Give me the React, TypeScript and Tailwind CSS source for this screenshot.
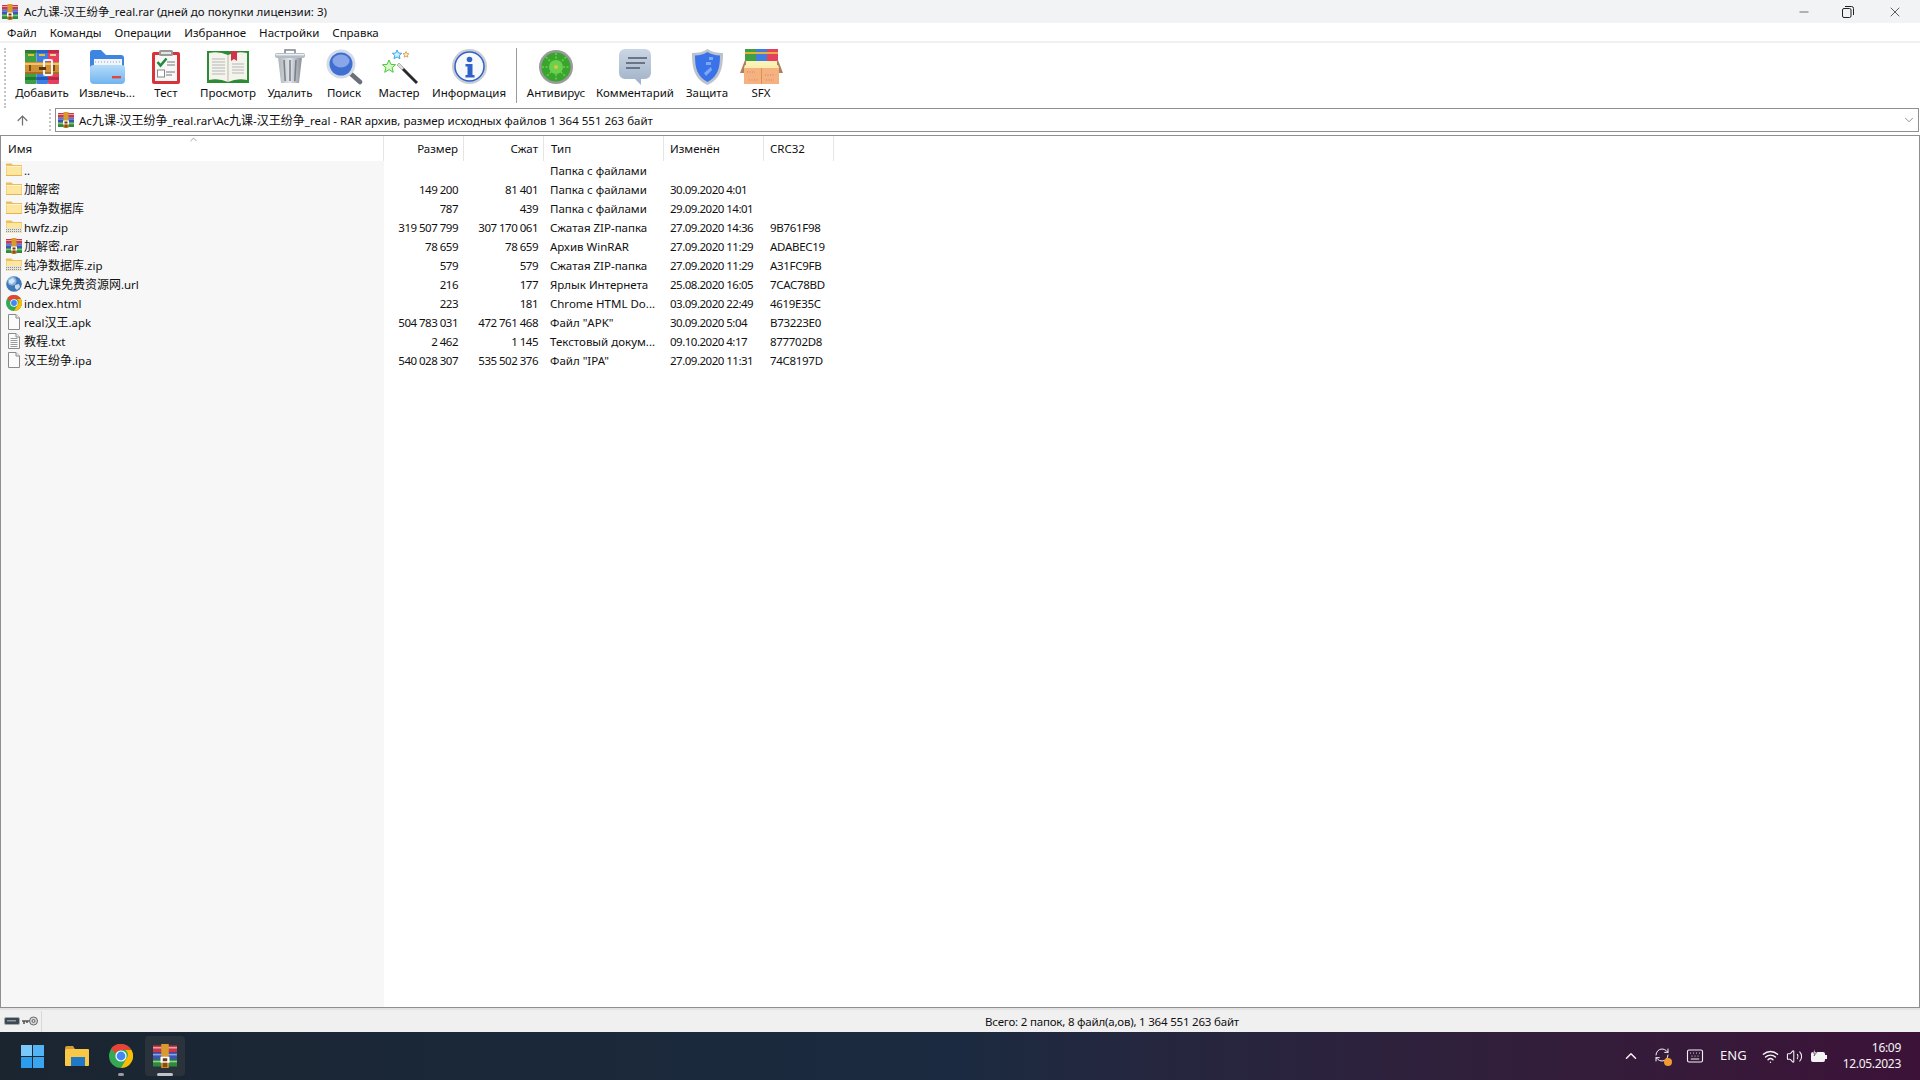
import { ArrowUp, ChevronDown, ChevronUp, Keyboard, Minus, RefreshCw, Volume2, Wifi, X } from "lucide-react";
import type { ReactNode } from "react";

const RarSmall = ({ size = 16 }: { size?: number }) => (
  <svg width={size} height={size} viewBox="0 0 16 16" className="shrink-0">
    <rect x="0" y="1" width="16" height="4.6" fill="#c8384c" />
    <rect x="0" y="5.6" width="16" height="4.6" fill="#3c55b4" />
    <rect x="0" y="10.2" width="16" height="4.8" fill="#2d8a3e" />
    <rect x="0" y="2" width="16" height="1" fill="#e9a0a0" />
    <rect x="0" y="6.6" width="16" height="1" fill="#8fa4e8" />
    <rect x="0" y="11.2" width="16" height="1" fill="#8fd08f" />
    <rect x="5.5" y="0" width="5" height="16" fill="#d99a2e" />
    <rect x="5" y="8.5" width="6" height="4" fill="#fff" />
    <rect x="6.5" y="9.5" width="3" height="2" fill="#6a3a1a" />
    <rect x="6.5" y="12.5" width="3" height="3" fill="#8a4a1a" />
  </svg>
);

const FolderIcon = () => (
  <svg width="16" height="16" viewBox="0 0 16 16" className="shrink-0">
    <path d="M0 1.5h5.5l1.5 1.500h9v11H0z" fill="#ecbe5c" />
    <rect x="0.5" y="4" width="15" height="10" fill="#fde6a0" />
    <rect x="0.5" y="4" width="15" height="1" fill="#fef3cf" />
    <rect x="0" y="13" width="16" height="1" fill="#e6b350" />
  </svg>
);

const ZipFolderIcon = () => (
  <svg width="16" height="16" viewBox="0 0 16 16" className="shrink-0">
    <path d="M0 1.5h5.5l1.5 1.500h9v11H0z" fill="#ecbe5c" />
    <rect x="0.5" y="4" width="15" height="10" fill="#fde6a0" />
    <rect x="0" y="9" width="16" height="4.500" fill="#e4e4da" />
    <path d="M0 10.500h16M0 12.500h16" stroke="#8f8f88" strokeDasharray="1 1" />
  </svg>
);

const GlobeIcon = () => (
  <svg width="16" height="16" viewBox="0 0 16 16" className="shrink-0">
    <circle cx="8" cy="8" r="7.8" fill="#3f78b8" />
    <circle cx="6" cy="5" r="4.5" fill="#9cc4e8" opacity="0.8" />
    <path d="M3 4l4-2 2 3-3 3-3-1zM9 9l4-1 1 3-3 3-2-2z" fill="#e4eef6" opacity="0.85" />
  </svg>
);

const ChromeIcon = ({ size = 16 }: { size?: number }) => (
  <svg width={size} height={size} viewBox="0 0 24 24" className="shrink-0">
    <circle cx="12" cy="12" r="12" fill="#34a853" />
    <path d="M12 0a12 12 0 0 1 10.4 6H12a6 6 0 0 0-5.6 3.8L2.2 4.3A12 12 0 0 1 12 0z" fill="#ea4335" />
    <path d="M22.4 6A12 12 0 0 1 12 24l5.2-9a6 6 0 0 0-.7-9z" fill="#fbbc05" />
    <circle cx="12" cy="12" r="5.6" fill="#fff" />
    <circle cx="12" cy="12" r="4.4" fill="#4285f4" />
  </svg>
);

const FileIcon = ({ lines = false }: { lines?: boolean }) => (
  <svg width="16" height="16" viewBox="0 0 16 16" className="shrink-0">
    <path d="M2.5 0.5h7.5l3.5 3.5v11.5h-11z" fill="#fbfbfb" stroke="#8a8a8a" />
    <path d="M10 0.5v3.5h3.5" fill="#eee" stroke="#8a8a8a" />
    {lines && <path d="M4.5 5.5h7M4.5 7.5h7M4.5 9.5h7M4.5 11.5h7M4.5 13.5h7" stroke="#9a9a9a" />}
  </svg>
);

const AddIcon = () => (
  <svg width="34" height="34" viewBox="0 0 34 34">
    <rect x="0" y="0" width="11.5" height="34" rx="1" fill="#3f9f45" />
    <rect x="11.5" y="0" width="11.5" height="34" rx="1" fill="#3f7ee0" />
    <rect x="23" y="0" width="11" height="34" rx="1" fill="#e54060" />
    <rect x="0" y="0" width="11.5" height="3" fill="#2c7d34" />
    <rect x="11.5" y="0" width="11.5" height="3" fill="#2a62c4" />
    <rect x="23" y="0" width="11" height="3" fill="#c22c48" />
    <rect x="3" y="4" width="6" height="2" fill="#e3c03c" />
    <rect x="14" y="4" width="6" height="2" fill="#e3c03c" />
    <rect x="25" y="4" width="6" height="2" fill="#f2d0a0" />
    <rect x="0" y="27" width="11.5" height="3" fill="#1f7d30" />
    <rect x="11.5" y="27" width="11.5" height="3" fill="#2458b8" />
    <rect x="23" y="27" width="11" height="3" fill="#b82840" />
    <rect x="0" y="12" width="34" height="12" fill="#cf9133" />
    <rect x="0" y="13" width="34" height="2" fill="#edc36c" />
    <rect x="0" y="22" width="34" height="2" fill="#a86e20" />
    <rect x="4" y="15" width="2" height="6" fill="#7a4a18" />
    <rect x="28" y="15" width="2" height="6" fill="#7a4a18" />
    <rect x="19" y="10" width="8" height="15" rx="1" fill="none" stroke="#f4f4f4" strokeWidth="2" />
    <rect x="14" y="17" width="7" height="3" fill="#5b3512" />
  </svg>
);

const ExtractIcon = () => (
  <svg width="36" height="34" viewBox="0 0 36 34">
    <defs>
      <linearGradient id="extractFront" x1="0" y1="0" x2="0" y2="1">
        <stop offset="0" stopColor="#b6dcfa" />
        <stop offset="1" stopColor="#6fb4f0" />
      </linearGradient>
    </defs>
    <path d="M1 3a3 3 0 0 1 3-3h8l5 5h15a3 3 0 0 1 3 3v22H1z" fill="#3c86e2" />
    <rect x="5" y="9" width="28" height="9" fill="#f2f6fa" />
    <path d="M6 12h26" stroke="#8a9fb8" strokeDasharray="1 2" />
    <path d="M1 18q0-3 4-3h27q4 0 4 3v12q0 4-4 4H5q-4 0-4-4z" fill="url(#extractFront)" />
    <rect x="23" y="26" width="9" height="2.4" fill="#e0483c" />
  </svg>
);

const TestIcon = () => (
  <svg width="28" height="34" viewBox="0 0 28 34">
    <rect x="0" y="2" width="28" height="32" rx="2" fill="#d7333a" />
    <rect x="3" y="5" width="22" height="26" fill="#f7f7f7" />
    <rect x="7" y="0" width="14" height="6" rx="1.5" fill="#9a9a9a" />
    <rect x="9" y="2" width="10" height="2" fill="#e4e4e4" />
    <path d="M5.5 12l3 3.5 6-7" fill="none" stroke="#1f8a38" strokeWidth="2.5" />
    <path d="M15 12h8M15 15h8M14 22h9M14 25h6" stroke="#777" />
    <rect x="5.5" y="20" width="7" height="7" fill="#fff" stroke="#888" />
  </svg>
);

const BookIcon = () => (
  <svg width="42" height="32" viewBox="0 0 42 32">
    <rect x="0" y="0" width="42" height="32" fill="#2d8a35" />
    <path d="M2 2q10-2 19 2 9-4 19-2v27q-10-2-19 2-9-4-19-2z" fill="#f4f4ec" />
    <path d="M21 4v27" stroke="#b8b8a8" />
    <path d="M5 8h13M5 11h13M5 14h13M5 17h13M5 20h13M5 23h13M25 13h12M25 16h12M25 19h12M25 22h12" stroke="#b5b5b5" />
    <path d="M24 0h6v10l-3-2-3 2z" fill="#d2324a" />
  </svg>
);

const TrashIcon = () => (
  <svg width="30" height="35" viewBox="0 0 30 35">
    <defs>
      <linearGradient id="trashBody" x1="0" y1="0" x2="1" y2="0">
        <stop offset="0" stopColor="#aeb4bc" />
        <stop offset="0.5" stopColor="#e2e6ea" />
        <stop offset="1" stopColor="#868c96" />
      </linearGradient>
    </defs>
    <path d="M10 4V1h10v3" fill="none" stroke="#7d838c" strokeWidth="1.5" />
    <path d="M3 8h24l-3 26H6z" fill="url(#trashBody)" />
    <path d="M9 11l1.2 21M15 11v21M21 11l-1.2 21" stroke="#7b818a" strokeWidth="1.6" />
    <rect x="0" y="4" width="30" height="5" rx="2" fill="#b6bcc4" />
    <rect x="1" y="5" width="28" height="1.4" fill="#eef0f2" />
  </svg>
);

const SearchIcon = () => (
  <svg width="37" height="36" viewBox="0 0 37 36">
    <path d="M24 24l10 9" stroke="#6a6f78" strokeWidth="4.500" strokeLinecap="round" />
    <circle cx="15" cy="15" r="14.5" fill="#d4dbe8" />
    <circle cx="15" cy="15" r="11.5" fill="#3f6fd0" />
    <ellipse cx="15" cy="12" rx="8.500" ry="6.500" fill="#88a6e8" />
  </svg>
);

const WizardIcon = () => (
  <svg width="38" height="36" viewBox="0 0 38 36">
    <path d="M18 15l19 19" stroke="#2a2a2a" strokeWidth="3" />
    <path d="M18 15l5 5" stroke="#dcdcdc" strokeWidth="3" />
    <path transform="translate(3 -1)" d="M6 12l2 4.4 4.6.3-3.5 3 1.2 4.6L6 21.6l-4.3 2.7 1.2-4.6-3.4-3 4.6-.3z" fill="#d8f8c8" stroke="#46c83a" />
    <path d="M17 1l1.4 3 3.3.3-2.5 2.2.8 3.2-3-1.8-3 1.8.8-3.2L12.400 4.300l3.300-.3z" fill="#d2efff" stroke="#38a8e8" />
    <path transform="translate(-1 1.500)" d="M27 1l.9 2 2.100.2-1.600 1.400.5 2.100L27 5.600l-1.900 1.100.5-2.100L24 3.200l2.100-.2z" fill="#fbeecb" stroke="#dca860" />
  </svg>
);

const InfoIcon = () => (
  <svg width="35" height="35" viewBox="0 0 35 35">
    <circle cx="17.500" cy="17.500" r="17.500" fill="#c9ccd2" />
    <circle cx="17.500" cy="17.500" r="14.500" fill="#f6f8fc" stroke="#2f62c8" strokeWidth="1.500" />
    <circle cx="17.500" cy="10.500" r="2.800" fill="#2f62c8" />
    <path d="M13.500 15h7v11h2v2.500h-9V26h2v-8.500h-2z" fill="#2f62c8" />
  </svg>
);

const AntivirusIcon = () => (
  <svg width="34" height="34" viewBox="0 0 34 34">
    <circle cx="17" cy="17" r="17" fill="#9a9a9a" />
    <circle cx="17" cy="17" r="14.500" fill="#3aa52e" />
    <circle cx="17" cy="17" r="7" fill="#6ad04e" />
    <path d="M17 3v28M3 17h28M7 7l20 20M27 7L7 27" stroke="#6ad04e" strokeWidth="1.500" strokeDasharray="2 1.500" />
    <circle cx="17" cy="17" r="2" fill="#d8c840" />
  </svg>
);

const CommentIcon = () => (
  <svg width="32" height="36" viewBox="0 0 32 36">
    <defs>
      <linearGradient id="commentBody" x1="0" y1="0" x2="0" y2="1">
        <stop offset="0" stopColor="#cbd6e4" />
        <stop offset="1" stopColor="#9fb0c8" />
      </linearGradient>
    </defs>
    <path d="M6 0h20a6 6 0 0 1 6 6v18a6 6 0 0 1-6 6h-4v6l-6-6H6a6 6 0 0 1-6-6V6a6 6 0 0 1 6-6z" fill="url(#commentBody)" />
    <path d="M9 9h19M7 14h19M7 19h14" stroke="#4f5968" strokeWidth="1.600" />
  </svg>
);

const ShieldIcon = () => (
  <svg width="31" height="36" viewBox="0 0 31 36">
    <path d="M15.500 0C11 3 6 4 0 4c0 14 2 26 15.500 32C29 30 31 18 31 4c-6 0-11-1-15.500-4z" fill="#bcc3cc" />
    <path d="M15.500 3C12 5 8 6.500 3 6.500c0 12 2 21 12.500 26.500C26 27.500 28 18.500 28 6.500 23 6.500 19 5 15.500 3z" fill="#3a72ea" />
    <path d="M17 8h4v3h-4zM14 13h5v3h-5zM12 24l7-6 1 3-6 6z" fill="#7fa8f2" />
  </svg>
);

const SfxIcon = () => (
  <svg width="43" height="35" viewBox="0 0 43 35">
    <rect x="5" y="0" width="11" height="16" fill="#3f9f45" />
    <rect x="16" y="0" width="11" height="16" fill="#3f7ee0" />
    <rect x="27" y="0" width="11" height="16" fill="#e54060" />
    <rect x="5" y="3" width="33" height="2" fill="#e3b23c" />
    <path d="M5 12h33v6H5z" fill="#fbf2b8" />
    <path d="M5 11L0 24h6V11zM38 11l5 13h-6V11z" fill="#b0805c" />
    <rect x="4" y="19" width="35" height="16" fill="#f4b27e" />
    <path d="M4 19h35l-1-3H5z" fill="#fbeeb0" />
    <rect x="21" y="19" width="1" height="16" fill="#d8905c" />
    <path d="M7 23h8M25 26h10M9 31h10M26 31h8" stroke="#e86a8a" strokeDasharray="1 1.500" />
  </svg>
);

const DragGrip = ({ className }: { className: string }) => (
  <div className={`w-0.5 border-l-2 border-dotted border-[#c4c4c4] ${className}`} />
);

// CJK runs sit at 12px in the reference, the latin text around them is narrower
const Mixed = ({ text }: { text: string }) => (
  <>
    {text.split(/([\u4e00-\u9fff]+)/).map((part, i) =>
      i % 2 === 1 ? (
        <span key={i} className="text-[12px]">
          {part}
        </span>
      ) : (
        part
      ),
    )}
  </>
);

const toolbar: { label: string; icon: ReactNode; width: string }[] = [
  { label: "Добавить", icon: <AddIcon />, width: "w-[64px]" },
  { label: "Извлечь...", icon: <ExtractIcon />, width: "w-[66px]" },
  { label: "Тест", icon: <TestIcon />, width: "w-[52px]" },
  { label: "Просмотр", icon: <BookIcon />, width: "w-[72px]" },
  { label: "Удалить", icon: <TrashIcon />, width: "w-[52px]" },
  { label: "Поиск", icon: <SearchIcon />, width: "w-[56px]" },
  { label: "Мастер", icon: <WizardIcon />, width: "w-[54px]" },
  { label: "Информация", icon: <InfoIcon />, width: "w-[86px]" },
];

const toolbar2: { label: string; icon: ReactNode; width: string }[] = [
  { label: "Антивирус", icon: <AntivirusIcon />, width: "w-[70px]" },
  { label: "Комментарий", icon: <CommentIcon />, width: "w-[88px]" },
  { label: "Защита", icon: <ShieldIcon />, width: "w-[56px]" },
  { label: "SFX", icon: <SfxIcon />, width: "w-[52px]" },
];

const menu = ["Файл", "Команды", "Операции", "Избранное", "Настройки", "Справка"];

const rows: { icon: ReactNode; name: string; size: string; packed: string; type: string; modified: string; crc: string }[] = [
  { icon: <FolderIcon />, name: "..", size: "", packed: "", type: "Папка с файлами", modified: "", crc: "" },
  { icon: <FolderIcon />, name: "加解密", size: "149 200", packed: "81 401", type: "Папка с файлами", modified: "30.09.2020 4:01", crc: "" },
  { icon: <FolderIcon />, name: "纯净数据库", size: "787", packed: "439", type: "Папка с файлами", modified: "29.09.2020 14:01", crc: "" },
  { icon: <ZipFolderIcon />, name: "hwfz.zip", size: "319 507 799", packed: "307 170 061", type: "Сжатая ZIP-папка", modified: "27.09.2020 14:36", crc: "9B761F98" },
  { icon: <RarSmall />, name: "加解密.rar", size: "78 659", packed: "78 659", type: "Архив WinRAR", modified: "27.09.2020 11:29", crc: "ADABEC19" },
  { icon: <ZipFolderIcon />, name: "纯净数据库.zip", size: "579", packed: "579", type: "Сжатая ZIP-папка", modified: "27.09.2020 11:29", crc: "A31FC9FB" },
  { icon: <GlobeIcon />, name: "Ac九课免费资源网.url", size: "216", packed: "177", type: "Ярлык Интернета", modified: "25.08.2020 16:05", crc: "7CAC78BD" },
  { icon: <ChromeIcon />, name: "index.html", size: "223", packed: "181", type: "Chrome HTML Do...", modified: "03.09.2020 22:49", crc: "4619E35C" },
  { icon: <FileIcon />, name: "real汉王.apk", size: "504 783 031", packed: "472 761 468", type: 'Файл "APK"', modified: "30.09.2020 5:04", crc: "B73223E0" },
  { icon: <FileIcon lines />, name: "教程.txt", size: "2 462", packed: "1 145", type: "Текстовый докум...", modified: "09.10.2020 4:17", crc: "877702D8" },
  { icon: <FileIcon />, name: "汉王纷争.ipa", size: "540 028 307", packed: "535 502 376", type: 'Файл "IPA"', modified: "27.09.2020 11:31", crc: "74C8197D" },
];

const ToolButton = ({ label, icon, width }: { label: string; icon: ReactNode; width: string }) => (
  <div className={`flex flex-col items-center ${width}`}>
    <div className="flex h-[37px] items-center justify-center">{icon}</div>
    <span className="whitespace-nowrap leading-[16px]">{label}</span>
  </div>
);

const HeaderCell = ({ label, className }: { label: string; className: string }) => (
  <div className={`flex items-center border-r border-[#e5e5e5] ${className}`}>{label}</div>
);

export default function App() {
  return (
    <div className="flex h-screen w-screen flex-col overflow-hidden bg-white font-['Noto_Sans','Noto_Sans_CJK_SC',sans-serif] text-[11.5px] text-[#111]">
      {/* title bar */}
      <div className="flex h-[23px] shrink-0 items-center bg-[#f2f3f5] pl-[2px]">
        <RarSmall />
        <span className="ml-[6px] flex-1 leading-[23px]">Ac九课-汉王纷争_real.rar (дней до покупки лицензии: 3)</span>
        <div className="flex items-center pr-[17px]">
          <Minus size={14} strokeWidth={1} className="mr-[31px]" />
          <svg width="12" height="12" viewBox="0 0 12 12" className="mr-[33px]" fill="none" stroke="#222">
            <rect x="0.5" y="2.500" width="8.500" height="9" rx="1.500" />
            <path d="M3 0.500h6.500a2 2 0 0 1 2 2V9" />
          </svg>
          <X size={16} strokeWidth={1} />
        </div>
      </div>

      {/* menu */}
      <div className="flex h-[20px] shrink-0 items-center gap-[13px] border-b-2 border-[#f0f0f0] pl-[7px] pt-[1px]">
        {menu.map((m) => (
          <span key={m}>{m}</span>
        ))}
      </div>

      {/* toolbar */}
      <div className="flex h-[65px] shrink-0 items-start pl-[4px] pt-[5px]">
        <DragGrip className="h-[60px]" />
        <div className="ml-[4px] flex">
          {toolbar.map((t) => (
            <ToolButton key={t.label} {...t} />
          ))}
        </div>
        <div className="mx-[4px] h-[55px] w-px bg-[#9a9a9a]" />
        <div className="flex">
          {toolbar2.map((t) => (
            <ToolButton key={t.label} {...t} />
          ))}
        </div>
      </div>

      {/* address */}
      <div className="flex h-[24px] shrink-0 items-center">
        <div className="flex w-[53px] items-center pl-[15px]">
          <ArrowUp size={15} strokeWidth={2} className="text-[#707070]" />
          <DragGrip className="ml-[19px] h-[22px]" />
        </div>
        <div className="ml-[2px] mr-[1px] flex h-[24px] flex-1 items-center border border-[#8f8f8f] pl-[2px]">
          <RarSmall />
          <span className="ml-[5px] flex-1 pt-[1px]">
            <Mixed text="Ac九课-汉王纷争_real.rar\Ac九课-汉王纷争_real - RAR архив, размер исходных файлов 1 364 551 263 байт" />
          </span>
          <ChevronDown size={14} strokeWidth={1} className="mr-[2px] text-[#444]" />
        </div>
      </div>

      {/* file list */}
      <div className="relative mt-[3px] flex min-h-0 flex-1 flex-col border border-[#8f8f8f]">
        <ChevronUp size={11} strokeWidth={1.500} className="absolute left-[187px] top-[-2px] text-[#777]" />
        <div className="grid h-[25px] shrink-0 grid-cols-[383px_80px_80px_120px_100px_70px]">
          <HeaderCell label="Имя" className="pl-[7px]" />
          <HeaderCell label="Размер" className="justify-end pr-[5px]" />
          <HeaderCell label="Сжат" className="justify-end pr-[5px]" />
          <HeaderCell label="Тип" className="pl-[7px]" />
          <HeaderCell label="Изменён" className="pl-[6px]" />
          <HeaderCell label="CRC32" className="pl-[6px]" />
        </div>
        <div className="flex min-h-0 flex-1">
          <div className="flex w-[383px] shrink-0 flex-col bg-[#f7f7f7] pl-[5px]">
            {rows.map((r) => (
              <div key={r.name} className="flex h-[19px] items-center gap-[2px]">
                <div className="-mt-[2px] flex">{r.icon}</div>
                <span className="whitespace-nowrap">
                  <Mixed text={r.name} />
                </span>
              </div>
            ))}
          </div>
          <div className="flex flex-col">
            {rows.map((r) => (
              <div key={r.name} className="grid h-[19px] grid-cols-[80px_80px_120px_100px_70px] items-center">
                <span className="pr-[6px] text-right tracking-[-0.5px]">{r.size}</span>
                <span className="pr-[6px] text-right tracking-[-0.5px]">{r.packed}</span>
                <span className="whitespace-nowrap pl-[6px]">{r.type}</span>
                <span className="whitespace-nowrap pl-[6px] tracking-[-0.5px]">{r.modified}</span>
                <span className="whitespace-nowrap pl-[6px] tracking-[-0.3px]">{r.crc}</span>
              </div>
            ))}
          </div>
        </div>
      </div>

      {/* status bar */}
      <div className="flex h-[24px] shrink-0 items-center border-t-2 border-[#e2e2e2] bg-[#f0f0f0]">
        <div className="flex h-[21px] w-[42px] items-center gap-[2px] border-r border-[#d8d8d8] pl-[4px]">
          <svg width="16" height="8" viewBox="0 0 16 8">
            <rect x="0.500" y="0.500" width="15" height="7" rx="1.500" fill="#3f4750" stroke="#a0a8b0" />
            <rect x="3" y="3" width="9" height="1.500" fill="#8a96a0" />
          </svg>
          <svg width="16" height="10" viewBox="0 0 16 10" fill="none">
            <path d="M0 5h8M2 5v3M5 5v2" stroke="#555" strokeWidth="1.600" />
            <circle cx="11.500" cy="5" r="4" fill="#d8d8d8" stroke="#666" />
            <circle cx="11.500" cy="5" r="1.500" stroke="#666" />
          </svg>
        </div>
        <span className="ml-[943px] pt-[1px] tracking-[-0.2px]">Всего: 2 папок, 8 файл(а,ов), 1 364 551 263 байт</span>
      </div>

      {/* taskbar */}
      <div className="flex h-[48px] shrink-0 items-center bg-gradient-to-r from-[#1a2530] via-[#1b2a40] to-[#3c1238] text-[#f4f4f4]">
        <div className="ml-[21px] grid h-[23px] w-[23px] grid-cols-2 gap-[1px]">
          <div className="bg-[#7cc8f8]" />
          <div className="bg-[#52b4f6]" />
          <div className="bg-[#2c9cec]" />
          <div className="bg-[#3aa4ee]" />
        </div>
        <svg width="24" height="20" viewBox="0 0 24 20" className="ml-[21px]">
          <path d="M0 2a2 2 0 0 1 2-2h6l2 3h-10z" fill="#d99a3a" />
          <rect x="0" y="3" width="24" height="17" rx="1" fill="#f9c846" />
          <rect x="6" y="11" width="14" height="9" fill="#1f78c8" />
        </svg>
        <div className="relative ml-[20px] flex h-[40px] w-[24px] items-center justify-center">
          <ChromeIcon size={24} />
          <div className="absolute bottom-0 h-[3px] w-[6px] rounded-full bg-[#9a9aa0]" />
        </div>
        <div className="relative ml-[12px] flex h-[40px] w-[40px] items-center justify-center rounded-[4px] bg-[#2a333c]">
          <RarSmall size={24} />
          <div className="absolute bottom-0 h-[3px] w-[16px] rounded-full bg-[#c0c4c8]" />
        </div>
        <div className="ml-auto flex items-center pr-[19px]">
          <ChevronUp size={18} strokeWidth={2} className="mr-[14px]" />
          <div className="relative mr-[16px] h-[18px] w-[16px]">
            <RefreshCw size={16} strokeWidth={1.500} />
            <div className="absolute -right-[2px] bottom-[-1px] h-[8px] w-[8px] rounded-full bg-[#f09a30]" />
          </div>
          <Keyboard size={18} strokeWidth={1.500} className="mr-[16px]" />
          <span className="mr-[15px] text-[13px]">ENG</span>
          <Wifi size={17} strokeWidth={2} className="mr-[7px]" />
          <Volume2 size={17} strokeWidth={1.500} className="mr-[8px]" />
          <svg width="16" height="14" viewBox="0 0 16 14" className="mr-[16px]">
            <rect x="0.500" y="3.500" width="13" height="9" rx="1" fill="#f4f4f4" stroke="#f4f4f4" />
            <rect x="14" y="6" width="2" height="4" fill="#f4f4f4" />
            <path d="M4 0L2 4h2L3 7l3-4H4z" fill="#f4f4f4" stroke="#3a1238" strokeWidth="0.500" />
          </svg>
          <div className="flex flex-col items-end text-[12px] leading-[16px] tracking-[-0.3px]">
            <span>16:09</span>
            <span>12.05.2023</span>
          </div>
        </div>
      </div>
    </div>
  );
}
